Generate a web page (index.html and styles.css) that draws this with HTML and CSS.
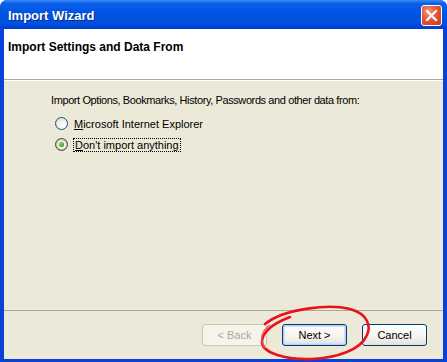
FILE: index.html
```html
<!DOCTYPE html>
<html lang="en">
<head>
  <meta charset="UTF-8" />
  <title>Import Wizard</title>
  <link rel="stylesheet" href="styles.css">
</head>
<body>
  <div class="window">
    <div class="titlebar">
      <span class="title">Import Wizard</span>
      <span class="close-btn">
        <svg width="13" height="13" viewBox="0 0 13 13">
          <path d="M2 2 L11 11 M11 2 L2 11" stroke="#fff" stroke-width="2.2" stroke-linecap="square" />
        </svg>
      </span>
    </div>

    <div class="frame">
      <div class="header">Import Settings and Data From</div>

      <div class="content">
        <div class="intro">Import Options, Bookmarks, History, Passwords and other data from:</div>
        <label class="radio-row">
          <span class="radio"></span>
          <span class="radio-label"><u>M</u>icrosoft Internet Explorer</span>
        </label>
        <label class="radio-row">
          <span class="radio checked"></span>
          <span class="radio-label focused"><u>D</u>on't import anything</span>
        </label>
      </div>

      <div class="footer">
        <button class="btn disabled">&lt; Back</button>
        <button class="btn default">Next &gt;</button>
        <button class="btn cancel">Cancel</button>
      </div>
    </div>

    <!-- hand-drawn circle around Next -->
    <svg class="scribble" width="130" height="62" viewBox="0 0 130 62">
      <path d="M15 24 C35 8 80 4 100 9 C118 14 121 26 117 35 C111 50 86 58 62 59 C36 60 12 53 12 42 C12 32 22 24 40 17"
            fill="none" stroke="#e8121c" stroke-width="2.6" stroke-linecap="round" />
      <path d="M15 48 C9 40 11 31 20 25" fill="none" stroke="#f05a60" stroke-width="1.2" />
    </svg>
  </div>
</body>
</html>
```

FILE: styles.css
```css
body {
  margin: 0;
  background: #fff;
  font-family: 'Liberation Sans', Arial, sans-serif;
  font-size: 11px;
  color: #000;
}

.window {
  position: relative;
  width: 447px;
  height: 362px;
  display: flex;
  flex-direction: column;
  background: #0842d8;
  border-radius: 7px 7px 0 0;
  overflow: hidden;
}

.titlebar {
  height: 29px;
  flex: none;
  display: flex;
  align-items: center;
  justify-content: space-between;
  padding: 0 5px 0 8px;
  background: linear-gradient(to bottom, #3c8cf6 0%, #0a5fe9 12%, #0054e3 45%, #0151e0 80%, #003dd0 100%);
}

.title {
  color: #fff;
  font-weight: bold;
  font-size: 13px;
  text-shadow: 1px 1px 0 #0a2a8c;
  margin-top: 1px;
}

.close-btn {
  width: 19px;
  height: 19px;
  border: 1px solid #fff;
  border-radius: 3px;
  display: flex;
  align-items: center;
  justify-content: center;
  background: radial-gradient(circle at 35% 30%, #f29a78 0%, #e2553a 45%, #c53a1b 100%);
  margin-top: 1px;
}

.frame {
  flex: 1;
  display: flex;
  flex-direction: column;
  margin: 0 4px 3px 4px;
  background: #ece9d8;
}

.header {
  height: 51px;
  flex: none;
  background: #fff;
  border-bottom: 1px solid #aca899;
  padding: 11px 0 0 4px;
  box-sizing: border-box;
  font-weight: bold;
  font-size: 12px;
  box-shadow: 0 1px 0 #fff;
}

.content {
  flex: 1;
  padding: 14px 0 0 47px;
}

.intro {
  height: 15px;
  margin-bottom: 7px;
  letter-spacing: -0.4px;
}

.radio-row {
  display: flex;
  align-items: center;
  gap: 6px;
  height: 15px;
  margin: 0 0 6px 4px;
}

.radio {
  width: 11px;
  height: 11px;
  border: 1px solid #1c5180;
  border-radius: 50%;
  background: radial-gradient(circle at 70% 70%, #fff 0%, #f3f2ec 40%, #dcd9cd 100%);
  display: flex;
  align-items: center;
  justify-content: center;
}

.radio.checked::after {
  content: "";
  width: 5px;
  height: 5px;
  border-radius: 50%;
  background: radial-gradient(circle at 40% 35%, #8fdc6e 0%, #3caa21 60%, #21a121 100%);
}

.radio.checked {
  box-shadow: inset 0 0 0 1px #f8b636;
}

.radio-label.focused {
  outline: 1px dotted #000;
  outline-offset: 0;
  padding: 0 1px;
}

.footer {
  height: 49px;
  flex: none;
  border-top: 1px solid #aca899;
  display: flex;
  align-items: flex-start;
  padding: 13px 16px 0 0;
  box-sizing: border-box;
  justify-content: flex-end;
}

.btn {
  width: 65px;
  height: 22px;
  font-family: inherit;
  font-size: 11px;
  color: #000;
  border: 1px solid #003c74;
  border-radius: 3px;
  background: linear-gradient(to bottom, #fff 0%, #f5f4ef 60%, #e4e2d8 100%);
  padding: 0;
}

.btn.disabled {
  color: #aca899;
  border-color: #c9c7ba;
  background: #f5f4ea;
  margin-right: 15px;
}

.btn.default {
  box-shadow: inset 0 0 0 1px #b9cdf6, inset 0 0 0 2px #d1dff9;
  margin-right: 15px;
}

.scribble {
  position: absolute;
  left: 250px;
  top: 300px;
}
```
